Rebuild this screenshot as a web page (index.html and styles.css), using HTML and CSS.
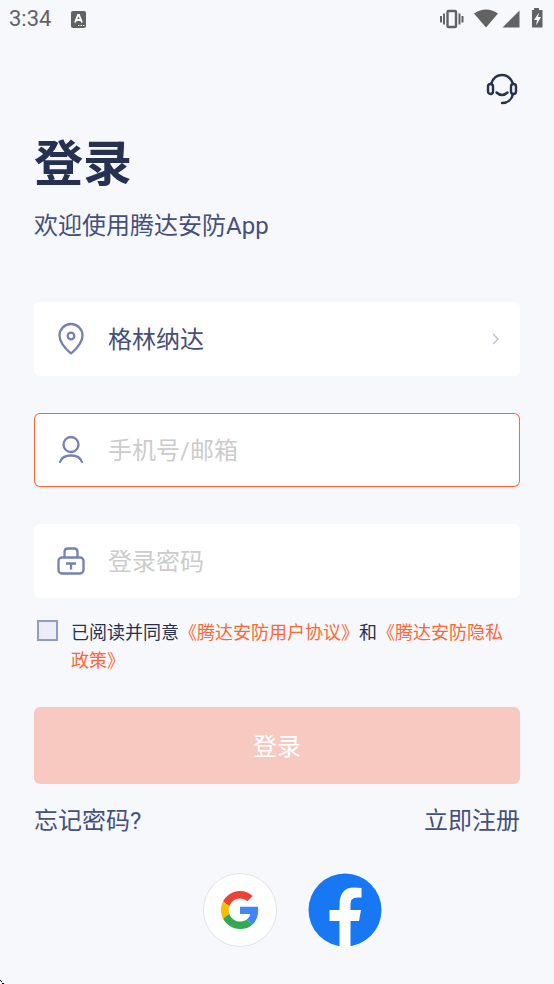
FILE: index.html
```html
<!DOCTYPE html>
<html lang="zh-CN">
<head>
<meta charset="utf-8">
<meta name="viewport" content="width=device-width, initial-scale=1">
<title>登录</title>
<link rel="stylesheet" href="styles.css">
</head>
<body>
<header class="status">
  <span class="clock">3:34</span>
  <svg class="keyboard" width="15" height="17" viewBox="0 0 15 17" aria-hidden="true"><rect width="15" height="17" rx="2" fill="#626264"/><path d="M4 11.500 7 4h1l3 7.500M5 9h5" fill="none" stroke="#fff" stroke-width="1.800"/><path d="M7 14.500h1.500m1 0H11m1 0h1.500" stroke="#fff" stroke-width="1.200"/></svg>
  <svg class="system" width="107" height="22" viewBox="0 0 107 22" aria-hidden="true">
    <g fill="none" stroke="#626264" stroke-width="2.400"><rect x="8.500" y="3" width="8.500" height="16" rx="1"/><path d="M5 5.500v11M20.500 5.500v11M2 8v6.500M23.500 8v6.500" stroke-width="2"/></g>
    <g fill="#626264"><path d="M35 5.500Q47 -2.500 59 5.500L47 19.500Z"/><path d="M80.500 2.500V19.500H63.500Z"/><path d="M95 0h5v2h3.500v17.500H93V2h2z"/></g>
    <path d="m100 4.500-5 7.500h3l-1 5.500 5-8.500h-3z" fill="#fff"/>
  </svg>
</header>
<main class="page">
  <button class="support" type="button" aria-label="联系客服">
    <svg width="32" height="32" viewBox="0 0 32 32" fill="none" stroke="#263050" stroke-width="2.400" stroke-linecap="round" aria-hidden="true"><rect x="2" y="11" width="5" height="10" rx="2.500"/><rect x="25" y="11" width="5" height="10" rx="2.500"/><path d="M5 11C7 5 11 2 16 2s9 3 11 9M27 21c-1 5-5 9-11 9M10.500 19.500Q16 24.500 21.500 19.500"/></svg>
  </button>
  <h1 class="title">登录</h1>
  <p class="welcome">欢迎使用腾达安防App</p>
  <form class="form">
    <button class="field" type="button">
      <svg class="icon" width="30" height="34" viewBox="0 0 30 34" fill="none" stroke="#7581b5" stroke-width="2.300" aria-hidden="true"><path d="M15 31.500C11 28 3.500 22 3.500 13.500A11.500 11.500 0 0 1 26.500 13.500C26.500 22 19 28 15 31.500Z" stroke-linejoin="round"/><circle cx="15" cy="14" r="3.300"/></svg>
      <span class="region">格林纳达</span>
      <svg class="chevron" width="8" height="12" viewBox="0 0 8 12" fill="none" stroke="#babed5" stroke-width="1.300" aria-hidden="true"><path d="m1 1 5 5-5 5"/></svg>
    </button>
    <label class="field field-active">
      <svg class="icon" width="30" height="34" viewBox="0 0 30 34" fill="none" stroke="#7581b5" stroke-width="2.300" stroke-linecap="round" aria-hidden="true"><circle cx="15" cy="11.500" r="7.500"/><path d="M4 29C5.500 24.500 9.500 22.500 15 22.500s9.500 2 11 6.500"/></svg>
      <input class="input" type="text" placeholder="手机号/邮箱" aria-label="手机号/邮箱">
    </label>
    <label class="field">
      <svg class="icon" width="30" height="34" viewBox="0 0 30 34" fill="none" stroke="#7581b5" stroke-width="2.300" aria-hidden="true"><rect x="2.500" y="13.500" width="25" height="16" rx="3.500"/><path d="M8.500 13V8Q8.500 4.500 12 4.500h6Q21.500 4.500 21.500 8V13M10 19.500h10M15 19.500V25.500"/></svg>
      <input class="input" type="password" placeholder="登录密码" aria-label="登录密码">
    </label>
    <div class="consent">
      <input class="check" id="agree" type="checkbox">
      <p class="terms"><label for="agree">已阅读并同意</label><a href="#terms">《腾达安防用户协议》</a>和<a href="#privacy">《腾达安防隐私政策》</a></p>
    </div>
    <button class="submit" type="submit">登录</button>
  </form>
  <nav class="links"><a href="#forgot">忘记密码?</a><a href="#register">立即注册</a></nav>
  <div class="social">
    <button class="provider google" type="button" aria-label="Google">
      <svg width="38" height="38" viewBox="0 0 48 48" aria-hidden="true"><path fill="#ea4335" d="M24 9.500c3.540 0 6.710 1.220 9.210 3.600l6.850-6.850C35.900 2.380 30.470 0 24 0 14.620 0 6.510 5.380 2.560 13.220l7.980 6.190C12.430 13.720 17.740 9.500 24 9.500z"/><path fill="#4285f4" d="M46.980 24.550c0-1.570-.15-3.090-.38-4.550H24v9.020h12.940c-.58 2.960-2.260 5.480-4.780 7.180l7.730 6c4.510-4.180 7.090-10.360 7.090-17.650z"/><path fill="#fbbc05" d="M10.530 28.590A14.500 14.500 0 0 1 9.770 24c0-1.600.27-3.140.76-4.590l-7.980-6.190A23.900 23.900 0 0 0 0 24c0 3.880.92 7.540 2.560 10.780z"/><path fill="#34a853" d="M24 48c6.480 0 11.930-2.130 15.890-5.810l-7.730-6C30.010 37.640 27.240 38.500 24 38.500c-6.260 0-11.570-4.220-13.470-9.910l-7.980 6.190C6.510 42.620 14.620 48 24 48z"/></svg>
    </button>
    <button class="provider" type="button" aria-label="Facebook">
      <svg width="74" height="74" viewBox="0 0 74 74" aria-hidden="true"><circle cx="37" cy="37" r="36.500" fill="#1877f2"/><path fill="#fff" d="M31.500 74V48H21.500V37h10V32Q31.500 14.500 46 14.500 50 14.500 53.500 15V24.500H49Q42.500 24.500 42.500 31v6h10.500l-2 11h-8.500V74z"/></svg>
    </button>
  </div>
</main>
<svg class="corner" width="4" height="4" viewBox="0 0 4 4" aria-hidden="true"><path d="M0 0h1v1H0zM1 1h1v1H1zM2 3h2v1H2z"/></svg>
</body>
</html>
```
FILE: styles.css
```css
* { box-sizing: border-box; }

body {
  margin: 0;
  min-height: 100vh;
  background: #f7f8fc;
  color: #444f7c;
  font: 24px/38px Roboto, "Noto Sans CJK SC", sans-serif;
}

button, input { font: inherit; color: inherit; }
button { border: 0; padding: 0; background: none; cursor: pointer; }
a { color: inherit; text-decoration: none; }
svg { display: block; flex: none; }

.status {
  display: flex;
  align-items: center;
  height: 38px;
  padding: 0 8px 0 9px;
  color: #626264;
}
.clock { font-size: 22px; }
.keyboard { margin-left: 20px; }
.system { margin-left: auto; }

.page { padding: 35px 34px 36px; }
.support { display: block; margin: 0 2px 0 auto; }

.title {
  margin: 22px 0 0;
  color: #263050;
  font-size: 49px;
  line-height: 76px;
  font-weight: 700;
}
.welcome { margin: 4px 0 0; }

.form {
  display: flex;
  flex-direction: column;
  margin-top: 57px;
}
.field {
  display: flex;
  align-items: center;
  width: 100%;
  height: 74px;
  margin-bottom: 37px;
  padding: 0 20px 0 22px;
  border-radius: 6px;
  background: #fff;
  text-align: left;
}
.field-active { box-shadow: inset 0 0 0 1px #ff6633; }
.icon { margin-right: 22px; }
.region { flex: 1; padding-top: 2px; }
.input {
  flex: 1;
  min-width: 0;
  padding: 2px 0 0;
  border: 0;
  outline: 0;
  background: none;
}
.input::placeholder { color: #ccc; opacity: 1; }

.consent {
  display: flex;
  gap: 13px;
  margin-top: -16px;
  padding-left: 3px;
}
.check {
  appearance: none;
  flex: none;
  width: 21px;
  height: 21px;
  margin: 1px 0 0;
  border: 2px solid #929bc5;
  background: #ebeef8;
}
.check:checked { background: #7581b5; }
.terms {
  margin: 0;
  color: #263050;
  font-size: 18px;
  line-height: 28px;
}
.terms a { color: #ff6633; }

.submit {
  height: 77px;
  margin-top: 32px;
  padding-top: 2px;
  border-radius: 6px;
  background: #f8c9c0;
  color: #fff;
}
.links {
  display: flex;
  justify-content: space-between;
  margin-top: 18px;
}
.social {
  display: flex;
  justify-content: center;
  gap: 31px;
  margin-top: 33px;
  padding-left: 30px;
}
.provider {
  display: grid;
  place-items: center;
  width: 74px;
  height: 74px;
  border-radius: 50%;
}
.google { border: 1px solid #e3e4e8; background: #fff; }

.corner { position: fixed; left: 0; bottom: 0; }
```
